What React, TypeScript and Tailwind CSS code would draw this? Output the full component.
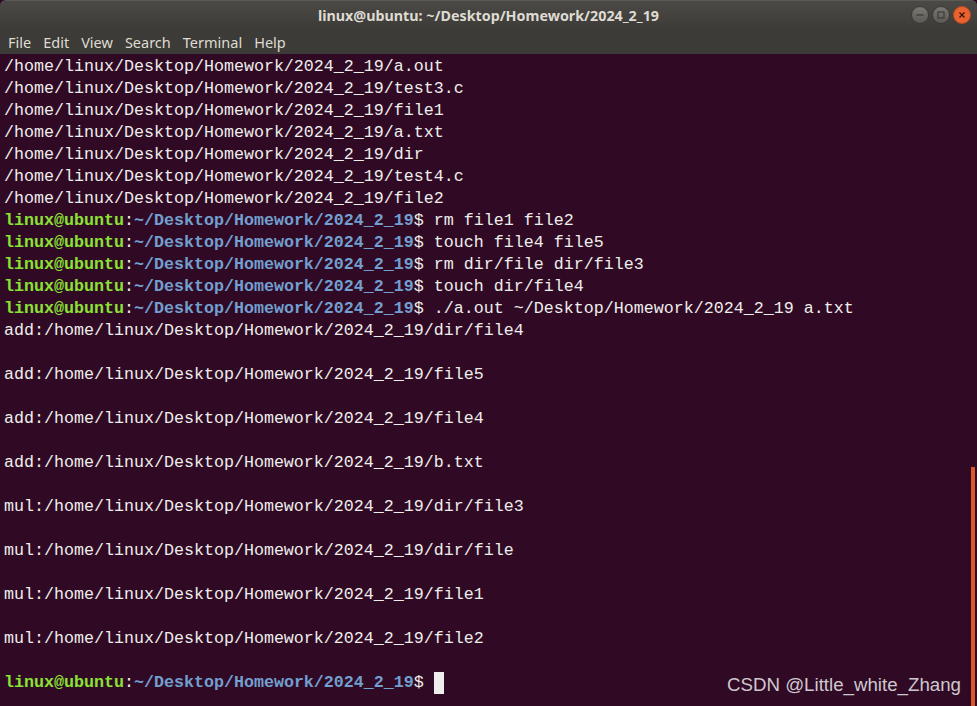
import React from 'react';

type Seg = { t: string; c?: 'g' | 'b' | 'w' };

const prompt = (cmd: string): Seg[] => [
  { t: 'linux@ubuntu', c: 'g' },
  { t: ':', c: 'w' },
  { t: '~/Desktop/Homework/2024_2_19', c: 'b' },
  { t: '$ ' + cmd, c: 'w' },
];

const base = '/home/linux/Desktop/Homework/2024_2_19/';

const lines: Seg[][] = [
  [{ t: base + 'a.out' }],
  [{ t: base + 'test3.c' }],
  [{ t: base + 'file1' }],
  [{ t: base + 'a.txt' }],
  [{ t: base + 'dir' }],
  [{ t: base + 'test4.c' }],
  [{ t: base + 'file2' }],
  prompt('rm file1 file2'),
  prompt('touch file4 file5'),
  prompt('rm dir/file dir/file3'),
  prompt('touch dir/file4'),
  prompt('./a.out ~/Desktop/Homework/2024_2_19 a.txt'),
  [{ t: 'add:' + base + 'dir/file4' }],
  [],
  [{ t: 'add:' + base + 'file5' }],
  [],
  [{ t: 'add:' + base + 'file4' }],
  [],
  [{ t: 'add:' + base + 'b.txt' }],
  [],
  [{ t: 'mul:' + base + 'dir/file3' }],
  [],
  [{ t: 'mul:' + base + 'dir/file' }],
  [],
  [{ t: 'mul:' + base + 'file1' }],
  [],
  [{ t: 'mul:' + base + 'file2' }],
  [],
];

const colorClass = (c?: string) =>
  c === 'g' ? 'text-[#8ae234] font-bold' : c === 'b' ? 'text-[#729fcf] font-bold' : 'text-[#eeeeec]';

function WinButton({ kind }: { kind: 'min' | 'max' | 'close' }) {
  const close = kind === 'close';
  return (
    <div
      className={`w-[18px] h-[18px] rounded-full flex items-center justify-center border ${
        close
          ? 'bg-[#e9622f] border-[#b84a20]'
          : 'bg-gradient-to-b from-[#7a7873] to-[#5a5954] border-[#3a3935]'
      }`}
    >
      <svg width="10" height="10" viewBox="0 0 10 10">
        {kind === 'min' && <line x1="1.5" y1="5" x2="8.5" y2="5" stroke="#3c3b37" strokeWidth="1.3" />}
        {kind === 'max' && <rect x="2" y="2" width="6" height="6" fill="none" stroke="#3c3b37" strokeWidth="1.2" />}
        {close && (
          <g stroke="#3a1508" strokeWidth="1.3">
            <line x1="2.5" y1="2.5" x2="7.5" y2="7.5" />
            <line x1="7.5" y1="2.5" x2="2.5" y2="7.5" />
          </g>
        )}
      </svg>
    </div>
  );
}

export default function App() {
  return (
    <div className="w-[977px] h-[706px] overflow-hidden bg-[#300a24] flex flex-col">
      {/* title bar */}
      <div className="bg-gradient-to-b from-[#4a4945] to-[#3c3b37] border-t border-[#5a5955] rounded-t-[6px]">
        <div className="relative h-[29px] flex items-center justify-center">
          <span className="text-[14.3px] font-bold text-[#dfdbd2] font-['Noto_Sans',sans-serif]">
            linux@ubuntu: ~/Desktop/Homework/2024_2_19
          </span>
          <div className="absolute right-[6px] top-[5px] flex gap-[3px]">
            <WinButton kind="min" />
            <WinButton kind="max" />
            <WinButton kind="close" />
          </div>
        </div>
      </div>
      {/* menu bar */}
      <div className="h-[24px] pt-[2px] bg-[#3c3b37] flex items-center gap-[12px] pl-[8px] text-[14.5px] text-[#dfdbd2] font-['Noto_Sans',sans-serif]">
        <span>File</span>
        <span>Edit</span>
        <span>View</span>
        <span>Search</span>
        <span>Terminal</span>
        <span>Help</span>
      </div>
      {/* terminal body */}
      <div className="relative flex-1 flex pt-[2px]">
        <div className="flex-1 pl-[4px] font-['Liberation_Mono',monospace] text-[16.67px] leading-[22px] whitespace-pre">
          {lines.map((segs, i) => (
            <div key={i} className="h-[22px]">
              {segs.map((s, j) => (
                <span key={j} className={colorClass(s.c)}>
                  {s.t}
                </span>
              ))}
            </div>
          ))}
          <div className="h-[22px] flex items-center">
            {prompt('').map((s, j) => (
              <span key={j} className={colorClass(s.c)}>
                {s.t}
              </span>
            ))}
            <span className="inline-block w-[10px] h-[22px] bg-[#eeeeec]" />
          </div>
        </div>
        <div className="w-[6px] flex flex-col">
          <div className="h-[411px]" />
          <div className="flex-1 w-[4px] bg-[#d9572c]" />
        </div>
        <span className="absolute right-[16px] bottom-[7px] text-[18.7px] text-[#cfc8cf] font-['Liberation_Sans',sans-serif]">
          CSDN @Little_white_Zhang
        </span>
      </div>
    </div>
  );
}
